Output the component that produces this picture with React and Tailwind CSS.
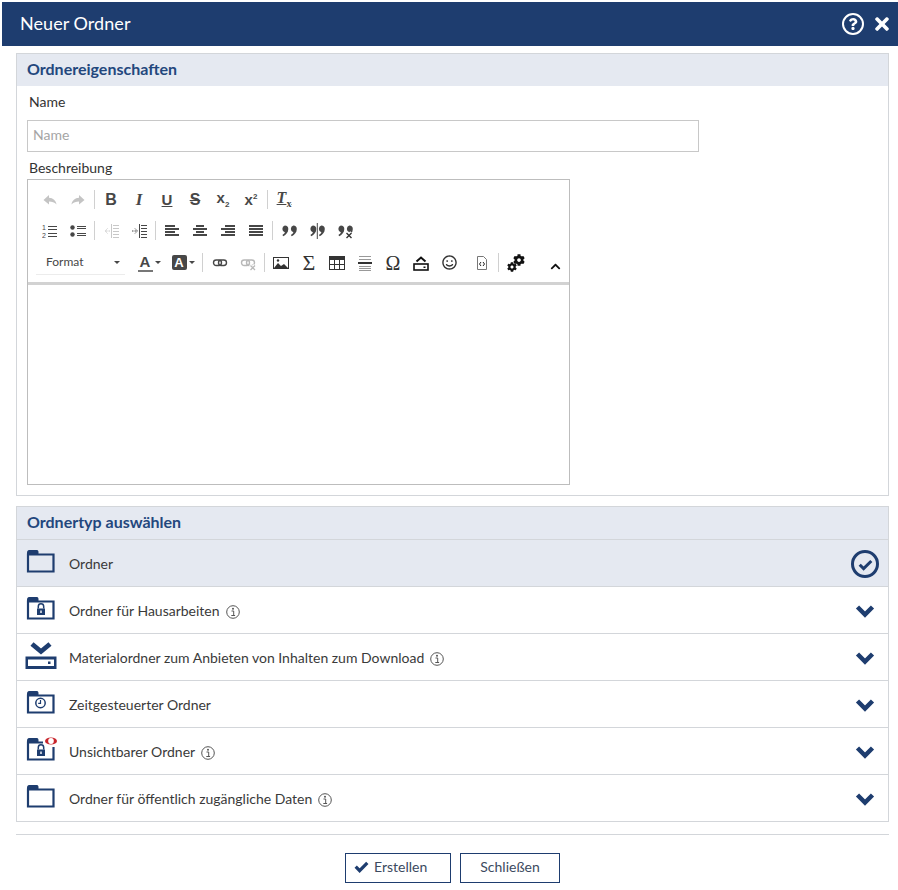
import React from 'react';
import { FaCog, FaChevronUp, FaTimes, FaRegSmile, FaQuestion } from 'react-icons/fa';

const NAVY = '#1e3d6f';

const Sep = () => <span className="mx-[2px] h-[19px] w-px bg-[#d0d0d0]" />;

function Btn({ children, className = 'w-[28px]' }) {
  return <span className={`flex h-[31px] items-center justify-center ${className}`}>{children}</span>;
}

function Glyph({ children, className = '' }) {
  return <span className={`font-['Liberation_Sans',sans-serif] leading-none text-[#474747] ${className}`}>{children}</span>;
}

function Ico({ children, size = 16, vb = 16 }) {
  return <svg width={size} height={size} viewBox={`0 0 ${vb} ${vb}`} fill="none">{children}</svg>;
}

const Undo = ({ flip }) => (
  <Ico>
    <path
      d="M7 3 1.500 8 7 12.500V9.500c3 0 5.500.8 7.500 3-.5-4-3.500-6.500-7.500-6.700z"
      fill="#c4c4c4"
      transform={flip ? 'matrix(-1 0 0 1 16 0)' : undefined}
    />
  </Ico>
);

const ListNum = () => (
  <Ico>
    <path d="M6 3.500h9M6 6.500h9M6 10.500h9M6 13.500h9" stroke="#474747" />
    <text x="0" y="7" fontSize="7" fontFamily="Liberation Sans" fill="#474747">1</text>
    <text x="0" y="14.500" fontSize="7" fontFamily="Liberation Sans" fill="#474747">2</text>
  </Ico>
);

const ListDot = () => (
  <Ico>
    <circle cx="2.500" cy="4.500" r="2.200" fill="#474747" />
    <circle cx="2.500" cy="11.500" r="2.200" fill="#474747" />
    <path d="M7 3.500h9M7 5.500h9M7 10.500h9M7 12.500h9" stroke="#474747" />
  </Ico>
);

const Indent = ({ on }) => {
  const c = on ? '#474747' : '#c8c8c8';
  return (
    <Ico>
      <path d="M8.500 1v14" stroke={c} />
      <path d="M10 2.500h6M10 5.500h6M10 8.500h6M10 11.500h6M10 14.500h6" stroke={c} />
      {on
        ? <path d="M1 8h5M4 5.500 6.500 8 4 10.500" stroke={c} strokeDasharray="1 .5" />
        : <path d="M7 8H2M4.500 5.500 2 8l2.500 2.500" stroke={c} strokeDasharray="1 .5" />}
    </Ico>
  );
};

const Align = ({ type }) => {
  const row = {
    left: ['M1 3h10', 'M1 6h14', 'M1 9h10', 'M1 12h14'],
    center: ['M4 3h8', 'M1 6h14', 'M4 9h8', 'M1 12h14'],
    right: ['M5 3h10', 'M1 6h14', 'M5 9h10', 'M1 12h14'],
    full: ['M1 3h14', 'M1 6h14', 'M1 9h14', 'M1 12h14'],
  }[type];
  return <Ico>{row.map(d => <path key={d} d={d} stroke="#333" strokeWidth="1.800" />)}</Ico>;
};

const Quote = ({ mode }) => (
  <Ico>
    <path d="M3.800 2.500a3.500 3.500 0 0 1 3.500 3.500c0 3.500-2.300 5.700-5 7.200l-.9-1.200c1.300-.9 2.200-1.800 2.500-2.800A3.500 3.500 0 0 1 3.800 2.500z" fill="#474747" />
    <path d="M12.300 2.500a3.500 3.500 0 0 1 3.500 3.500c0 3.500-2.300 5.700-5 7.200l-.9-1.200c1.300-.9 2.200-1.800 2.500-2.800a3.500 3.500 0 0 1-.1-6.700z" fill="#474747" />
    {mode === 'split' && <path d="M8.300 0v16" stroke="#474747" />}
    {mode === 'remove' && <path d="M9 9.500l5.500 5.500M14.500 9.500 9 15" stroke="#fff" strokeWidth="3.500" />}
    {mode === 'remove' && <path d="M9.500 10l5 5M14.500 10l-5 5" stroke="#333" strokeWidth="1.400" />}
  </Ico>
);

const Caret = () => <span className="ml-[2px] h-0 w-0 border-x-[3px] border-t-[3px] border-x-transparent border-t-[#474747]" />;

const Chain = ({ off }) => {
  const c = off ? '#b8b8b8' : '#474747';
  return (
    <Ico>
      <rect x="1.500" y="5" width="8" height="5.500" rx="2.700" stroke={c} strokeWidth="1.400" />
      <rect x="6.500" y="5" width="8" height="5.500" rx="2.700" stroke={c} strokeWidth="1.400" />
      {off && <path d="M10 10l5 5M15 10l-5 5" stroke="#fff" strokeWidth="3" />}
      {off && <path d="M10.500 10.500l4.500 4.500M15 10.500 10.500 15" stroke={c} strokeWidth="1.300" />}
    </Ico>
  );
};

const ImageIcon = () => (
  <Ico>
    <rect x=".5" y="2.500" width="15" height="11" stroke="#333" />
    <path d="M1 13l4-5 3 3 3-2 4 4z" fill="#333" />
    <circle cx="5" cy="5.500" r="1.200" fill="#333" />
  </Ico>
);

const TableIcon = () => (
  <Ico>
    <rect x=".5" y="1.500" width="15" height="13" stroke="#333" />
    <rect x="1" y="2" width="14" height="3" fill="#333" />
    <path d="M5.500 5v9M10.500 5v9M1 9.500h14" stroke="#333" />
  </Ico>
);

const HrIcon = () => (
  <Ico>
    <path d="M2 1.500h12M2 4.500h12M2 11.500h12M2 13.500h12M2 15.500h12" stroke="#999" />
    <path d="M1 8h14" stroke="#333" strokeWidth="2" />
  </Ico>
);

const BoxIcon = () => (
  <Ico>
    <path d="M3.500 6.500 8 2.500l4.500 4" stroke="#111" strokeWidth="2" />
    <rect x="1" y="9" width="14" height="6" stroke="#111" strokeWidth="1.600" />
    <rect x="10.500" y="11.500" width="2" height="1.500" fill="#111" />
  </Ico>
);

const SourceIcon = () => (
  <Ico>
    <path d="M3.500 1.500h6l3 3v10h-9z" stroke="#777" />
    <path d="M7 7 5.500 9 7 11M9 7l1.500 2L9 11" stroke="#222" />
  </Ico>
);

const Gears = () => (
  <span className="relative block h-[18px] w-[18px] text-[#111]">
    <FaCog className="absolute right-0 top-0 text-[12px]" />
    <FaCog className="absolute bottom-0 left-0 text-[10px]" />
  </span>
);

const BoldCheck = ({ size = 15, width = 3.500 }) => (
  <svg width={size} height={size} viewBox="0 0 16 16" fill="none" className="shrink-0">
    <path d="M1.800 8.200 6 12.400l8.200-8.200" stroke={NAVY} strokeWidth={width} />
  </svg>
);

const RowChevron = () => (
  <svg width="20" height="14" viewBox="0 0 20 14" fill="none" className="mt-[2px]">
    <path d="M2.500 3 10 10.500 17.500 3" stroke={NAVY} strokeWidth="4.500" />
  </svg>
);

function FolderIcon({ kind }) {
  return (
    <svg width="32" height="32" viewBox="0 0 32 32" fill="none" className="shrink-0">
      {kind === 'download' ? (
        <>
          <path d="M7 3 16 10.500 25 3" stroke={NAVY} strokeWidth="4.800" />
          <path d="M.5 15.500h31V28H.5z" fill={NAVY} />
          <rect x="3" y="18.500" width="26" height="6.500" fill="#fff" />
          <rect x="23" y="20.500" width="2.500" height="2.500" fill={NAVY} />
        </>
      ) : (
        <>
          <path d="M2 5.500C2 4 3 3 4 3h8c1 0 1.500 1 1.500 2.500V8H2z" fill={NAVY} />
          <path
            d={kind === 'hidden' ? 'M13 7.500h5M28.500 12v12.500H3V7.500h10' : 'M3 7.500h25.500v17H3z'}
            stroke={NAVY}
            strokeWidth="2.200"
          />
          {(kind === 'lock' || kind === 'hidden') && (
            <>
              <path d="M13.300 14.500v-2a2.700 2.700 0 0 1 5.400 0v2" stroke={NAVY} strokeWidth="1.500" />
              <rect x="12" y="14.500" width="8" height="6.500" fill={NAVY} />
              <rect x="15.300" y="16.500" width="1.400" height="2.500" fill="#fff" />
            </>
          )}
          {kind === 'clock' && (
            <>
              <circle cx="15.500" cy="15" r="4.700" stroke={NAVY} strokeWidth="1.500" />
              <path d="M15.500 12v3.300h-2.300" stroke={NAVY} strokeWidth="1.200" />
            </>
          )}
          {kind === 'hidden' && (
            <>
              <ellipse cx="26" cy="6" rx="6" ry="3.600" fill="#c8242b" />
              <ellipse cx="26" cy="6" rx="2.800" ry="3" fill="#fff" />
            </>
          )}
        </>
      )}
    </svg>
  );
}

function InfoIcon() {
  return (
    <svg width="14" height="14" viewBox="0 0 14 14" fill="none" className="ml-[6px] mt-[4px] shrink-0">
      <circle cx="7" cy="7" r="6.300" stroke="#555" />
      <circle cx="7" cy="3.800" r="1" fill="#555" />
      <path d="M5.500 6h2.200v4.300M5.300 10.500h3.800" stroke="#555" />
    </svg>
  );
}

function TypeRow({ kind, label, info, selected }) {
  return (
    <div className={`flex h-[47px] items-center border-t border-[#d3d6da] pl-[8px] pr-[8px] ${selected ? 'bg-[#e5e9f1]' : 'bg-white'}`}>
      <span className="flex w-[44px] shrink-0 items-center"><FolderIcon kind={kind} /></span>
      <span className="text-[14px] text-[#3a3a3a]">{label}</span>
      {info && <InfoIcon />}
      <span className="ml-auto flex w-[30px] items-center justify-center">
        {selected ? (
          <span className="mt-[2px] flex h-[28px] w-[28px] items-center justify-center rounded-full border-[3px] border-[#1e3d6f]">
            <BoldCheck size={15} width={3.200} />
          </span>
        ) : (
          <RowChevron />
        )}
      </span>
    </div>
  );
}

function Toolbar() {
  return (
    <div className="border-b-[3px] border-[#d2d2d2] pb-[4px] pl-[8px] pt-[4px]">
      <div className="flex items-center">
        <Btn><Undo /></Btn>
        <Btn><Undo flip /></Btn>
        <Sep />
        <Btn><Glyph className="text-[16px] font-bold">B</Glyph></Btn>
        <Btn><span className="font-['Liberation_Serif',serif] text-[17px] font-bold italic leading-none text-[#474747]">I</span></Btn>
        <Btn><Glyph className="text-[15px] font-bold underline">U</Glyph></Btn>
        <Btn><Glyph className="text-[16px] font-bold line-through">S</Glyph></Btn>
        <Btn><Glyph className="text-[15px] font-bold">x<span className="align-sub text-[8px]">2</span></Glyph></Btn>
        <Btn><Glyph className="text-[15px] font-bold">x<span className="align-super text-[8px]">2</span></Glyph></Btn>
        <Sep />
        <Btn><span className="font-['Liberation_Serif',serif] text-[16px] font-bold italic leading-none text-[#474747] underline">T<span className="align-sub text-[10px] not-italic no-underline">x</span></span></Btn>
      </div>
      <div className="flex items-center">
        <Btn><ListNum /></Btn>
        <Btn><ListDot /></Btn>
        <Sep />
        <Btn><Indent /></Btn>
        <Btn><Indent on /></Btn>
        <Sep />
        <Btn><Align type="left" /></Btn>
        <Btn><Align type="center" /></Btn>
        <Btn><Align type="right" /></Btn>
        <Btn><Align type="full" /></Btn>
        <Sep />
        <Btn><Quote /></Btn>
        <Btn><Quote mode="split" /></Btn>
        <Btn><Quote mode="remove" /></Btn>
      </div>
      <div className="mt-px flex items-center">
        <span className="relative flex h-[31px] w-[89px] items-center justify-between pb-[1px] pl-[10px] pr-[5px] text-[12px] text-[#474747]">
          Format
          <Caret />
          <span className="absolute bottom-[3px] left-0 h-px w-full bg-[#ececec]" />
        </span>
        <Btn className="ml-[7px] w-[34px]">
          <span className="flex flex-col items-center">
            <Glyph className="text-[15px] font-bold">A</Glyph>
            <span className="mt-px h-[2px] w-[15px] bg-[#777]" />
          </span>
          <Caret />
        </Btn>
        <Btn className="w-[34px]">
          <span className="flex h-[15px] w-[15px] items-center justify-center rounded-[2px] bg-[#474747] font-['Liberation_Sans',sans-serif] text-[13px] font-bold leading-none text-white">A</span>
          <Caret />
        </Btn>
        <Sep />
        <Btn className="ml-px w-[28px]"><Chain /></Btn>
        <Btn><Chain off /></Btn>
        <Sep />
        <Btn><ImageIcon /></Btn>
        <Btn><span className="font-['Liberation_Serif',serif] text-[22px] leading-none text-[#333]">Σ</span></Btn>
        <Btn><TableIcon /></Btn>
        <Btn><HrIcon /></Btn>
        <Btn><span className="font-['Liberation_Serif',serif] text-[20px] leading-none text-[#333]">Ω</span></Btn>
        <Btn><BoxIcon /></Btn>
        <Btn><FaRegSmile className="text-[15px] text-[#333]" /></Btn>
        <Btn className="ml-[5px] w-[28px]"><SourceIcon /></Btn>
        <Sep />
        <Btn className="ml-px w-[28px]"><Gears /></Btn>
        <Btn className="ml-auto w-[28px]"><FaChevronUp className="mt-[8px] text-[11px] text-[#111]" /></Btn>
      </div>
    </div>
  );
}

export default function App() {
  return (
    <div className="bg-white pl-[2px] pt-[2px] font-['Lato',sans-serif] text-[14px] text-[#333]">
      <header className="flex h-[44px] items-center bg-[#1e3d6f] pb-px pl-[18px] pr-[6px] text-[18px] text-white">
        <h1 className="tracking-[0.05px]">Neuer Ordner</h1>
        <span className="ml-auto flex h-[22px] w-[22px] items-center justify-center rounded-full border-2 border-white">
          <FaQuestion className="text-[12px]" />
        </span>
        <FaTimes className="ml-[8px] text-[20px]" />
      </header>

      <div className="ml-[14px] mr-[9px] pt-[7px]">
        <section className="border border-[#d3d6da] px-[10px] pb-[10px]">
          <h2 className="-mx-[10px] flex h-[32px] items-center bg-[#e5e9f1] px-[10px] pb-[2px] text-[16px] font-bold text-[#23477d]">Ordnereigenschaften</h2>
          <label className="mt-[6px] block h-[20px] pl-[2px] leading-[20px]">Name</label>
          <input
            placeholder="Name"
            readOnly
            className="mt-[8px] block h-[32px] w-[672px] border border-[#c8c8c8] px-[5px] pb-[3px] text-[14px] placeholder:text-[#a5a5a5]"
          />
          <label className="mt-[6px] block h-[20px] pl-[2px] leading-[20px]">Beschreibung</label>
          <div className="mt-px h-[306px] w-[543px] border border-[#bdbdbd]">
            <Toolbar />
          </div>
        </section>

        <section className="mt-[10px] border border-[#d3d6da]">
          <h2 className="flex h-[32px] items-center bg-[#e5e9f1] px-[10px] pb-[2px] text-[16px] font-bold text-[#23477d]">Ordnertyp auswählen</h2>
          <TypeRow kind="plain" label="Ordner" selected />
          <TypeRow kind="lock" label="Ordner für Hausarbeiten" info />
          <TypeRow kind="download" label="Materialordner zum Anbieten von Inhalten zum Download" info />
          <TypeRow kind="clock" label="Zeitgesteuerter Ordner" />
          <TypeRow kind="hidden" label="Unsichtbarer Ordner" info />
          <TypeRow kind="plain" label="Ordner für öffentlich zugängliche Daten" info />
        </section>

        <div className="mt-[12px] border-t border-[#d3d6da] pt-[18px]">
          <div className="flex justify-center gap-[9px]">
            <button className="flex h-[30px] w-[106px] items-center gap-[5px] border border-[#1e3d6f] pb-[3px] pl-[8px] text-[14px] text-[#3c4a60]">
              <BoldCheck size={15} />
              Erstellen
            </button>
            <button className="h-[30px] w-[100px] border border-[#1e3d6f] pb-[3px] text-[14px] text-[#3c4a60]">Schließen</button>
          </div>
        </div>
      </div>
    </div>
  );
}
